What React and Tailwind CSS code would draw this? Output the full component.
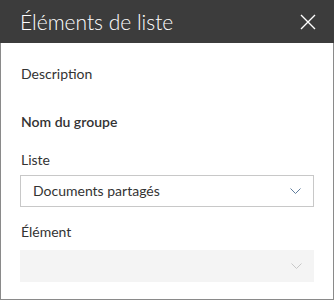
import React from 'react';

const Chevron = ({ className }) => (
  <svg width="11" height="6" viewBox="0 0 11 6" className={className} fill="none">
    <path d="M0.5 0.5 L5.5 5.5 L10.5 0.5" stroke="currentColor" strokeWidth="1" />
  </svg>
);

const App = () => {
  return (
    <div className="w-[334px] h-[300px] bg-white border-x border-b border-[#8a8a8a] text-[#333] font-['Segoe_UI','Lato',sans-serif]">
      <div className="h-[43px] bg-[#3c3c3c] -mx-px flex items-center justify-between pl-5 pr-[18px]">
        <h1 className="text-[21px] font-light text-white leading-none">Éléments de liste</h1>
        <button className="text-white">
          <svg width="16" height="16" viewBox="0 0 16 16" fill="none">
            <path d="M1 1 L15 15 M15 1 L1 15" stroke="currentColor" strokeWidth="1.4" />
          </svg>
        </button>
      </div>

      <div className="px-[19px] pt-[21px]">
        <p className="text-sm leading-5 pl-px">Description</p>
        <p className="mt-[28px] text-sm leading-5 font-semibold pl-px">Nom du groupe</p>

        <label className="block mt-[18px] text-sm leading-5 pl-px">Liste</label>
        <div className="mt-[5px] h-8 border border-[#c8c8c8] flex items-center justify-between pl-3 pr-3">
          <span className="text-sm">Documents partagés</span>
          <Chevron className="text-[#5f7c9c]" />
        </div>

        <label className="block mt-[15px] text-sm leading-5 pl-px">Élément</label>
        <div className="mt-2 h-8 bg-[#f4f4f4] flex items-center justify-end pr-3">
          <Chevron className="text-[#c8c8c8]" />
        </div>
      </div>
    </div>
  );
};

export default App;
